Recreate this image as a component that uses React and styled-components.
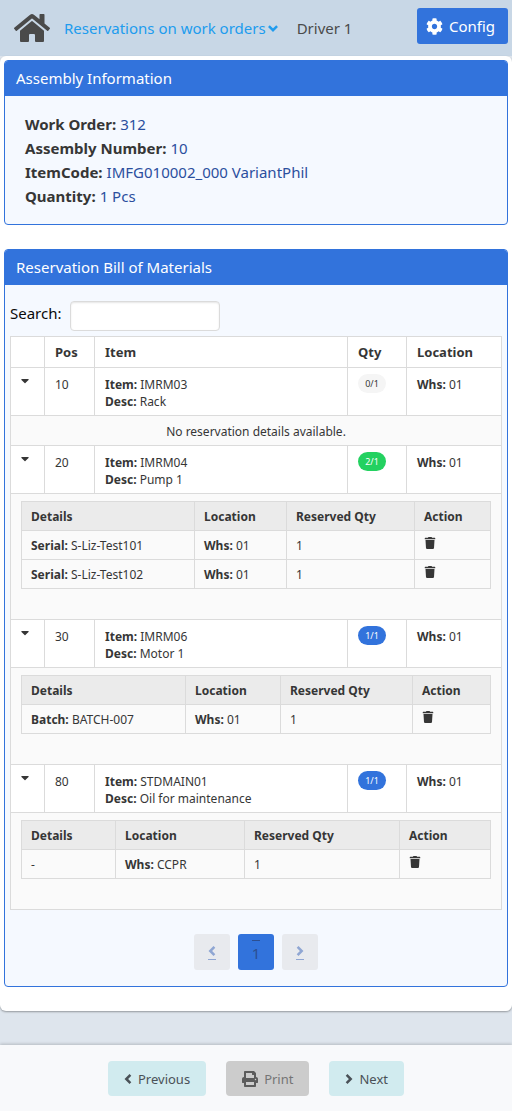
import React from 'react';
import styled, { createGlobalStyle, css } from 'styled-components';
import { FaHome, FaCog, FaTrash, FaPrint } from 'react-icons/fa';

const blue = '#3273dc';
const line = '#dbdbdb';

const GlobalStyle = createGlobalStyle`
  * { box-sizing: border-box; }
  body {
    margin: 0;
    background: #dee5ed;
    color: #363636;
    font: 15px/24px "Noto Sans", "Open Sans", sans-serif;
  }
  button, input { font: inherit; }
  strong, th { font-weight: 700; }
`;

const Page = styled.div`
  display: flex;
  flex-direction: column;
  min-height: 100vh;
`;

const TopBar = styled.header`
  display: flex;
  align-items: center;
  height: 56px;
  padding: 0 4px 0 14px;
  background: #c8d7e6;
  color: #4a4a4a;
`;

const HomeLink = styled.a`
  display: flex;
  margin-right: 14px;
  color: #4a4a4a;
  font-size: 36px;
`;

const MenuButton = styled.button`
  display: flex;
  align-items: center;
  gap: 1px;
  padding: 0;
  border: 0;
  background: none;
  color: #209cee;
  margin-right: 18px;
`;

const ConfigButton = styled.button`
  display: flex;
  align-items: center;
  gap: 6px;
  height: 36px;
  margin: 0 0 4px auto;
  padding: 0 13px 0 9px;
  border: 0;
  border-radius: 3px;
  background: ${blue};
  color: #fff;
  svg { font-size: 17px; }
`;

const Sheet = styled.main`
  display: flex;
  flex-direction: column;
  gap: 24px;
  padding: 4px 4px 24px;
  margin-bottom: 34px;
  border-radius: 6px;
  background: #fff;
  box-shadow: 0 1px 2px rgba(10, 10, 10, 0.35);
`;

const Panel = styled.section`
  border: 1px solid ${blue};
  border-radius: 4px;
  background: #f5f9ff;
  overflow: hidden;
`;

const PanelTitle = styled.h2`
  margin: 0;
  padding: 5px 11px 6px;
  background: ${blue};
  color: #fff;
  font-size: 15px;
  font-weight: 400;
`;

const Facts = styled.dl`
  margin: 0;
  padding: 16px 20px;
`;

const Fact = styled.div`
  display: flex;
  gap: 4px;
  dt { font-weight: 700; }
  dd { margin: 0; color: #2b4f9e; }
`;

const BomBody = styled.div`
  padding: 16px 5px;
`;

const SearchRow = styled.div`
  display: flex;
  align-items: center;
  gap: 8px;
  margin-bottom: 5px;
  color: #0a0a0a;
  label { padding-bottom: 6px; }
`;

const SearchInput = styled.input`
  width: 150px;
  height: 30px;
  padding: 0 8px;
  border: 1px solid ${line};
  border-radius: 4px;
  background: #fff;
  box-shadow: inset 0 1px 2px rgba(10, 10, 10, 0.1);
`;

const grid = css`
  width: 100%;
  border-collapse: collapse;
  table-layout: fixed;
  th, td {
    border: 1px solid ${line};
    text-align: left;
    vertical-align: top;
  }
`;

const BomTable = styled.table`
  ${grid}
  background: #fff;
  font-size: 12px;
  line-height: 17px;
  > thead > tr > th { padding: 7px 10px 6px; font-size: 13px; }
`;

const Column = styled.col`
  width: ${(p) => p.$width};
`;

const TextCell = styled.td`
  padding: 8px 10px 5px;
`;

const QtyCell = styled.td`
  padding: 6px 10px;
`;

const Message = styled.td`
  padding: 8px 10px 5px;
  background: #fafafa;
  line-height: 16px;
  && { text-align: center; }
`;

const DetailCell = styled.td`
  padding: 7px 10px 6px;
  background: #fafafa;
`;

const DetailTable = styled.table`
  ${grid}
  margin-bottom: 24px;
  line-height: 16px;
  th { padding: 7px 9px 5px; background: #ebebeb; }
  td { padding: 7px 9px 5px; }
`;

const ActionCell = styled.td`
  && { padding: 6px 9px; }
`;

const IconButton = styled.button`
  display: block;
  padding: 0;
  border: 0;
  background: none;
  color: #363636;
  font-size: 12px;
  line-height: 12px;
  svg { display: block; }
`;

const Tag = styled.span`
  display: inline-block;
  min-width: 28px;
  padding: 0 7px;
  border-radius: 10px;
  font-size: 9px;
  line-height: 19px;
  text-align: center;
  vertical-align: top;
  background: ${(p) => ({ none: '#f5f5f5', over: '#23d160', full: blue }[p.$state])};
  color: ${(p) => (p.$state === 'none' ? '#363636' : '#fff')};
`;

const Pagination = styled.nav`
  display: flex;
  justify-content: center;
  gap: 8px;
  margin-top: 24px;
`;

const PageButton = styled.button`
  display: flex;
  align-items: center;
  justify-content: center;
  width: 36px;
  height: 36px;
  padding: 0;
  border: 0;
  border-radius: 3px;
  background: ${(p) => (p.$current ? blue : '#e8eaee')};
  color: ${(p) => (p.$current ? '#2c4f91' : '#8fa6d3')};
  span {
    display: flex;
    ${(p) => (p.$current
    ? 'border-top: 1px solid;'
    : 'padding-bottom: 2px; border-bottom: 1px solid;')}
  }
`;

const Footer = styled.footer`
  display: flex;
  justify-content: center;
  gap: 20px;
  margin-top: auto;
  padding: 16px 8px 15px;
  background: #f8f9fb;
  box-shadow: 0 -1px 3px rgba(10, 10, 10, 0.2);
`;

const FooterButton = styled.button`
  display: flex;
  align-items: center;
  gap: 6px;
  height: 35px;
  padding: 0 16px;
  border: 0;
  border-radius: 4px;
  background: ${(p) => (p.disabled ? '#cccccc' : '#d1ebef')};
  color: ${(p) => (p.disabled ? '#757575' : '#4a5157')};
  font-size: 13px;
`;

const PrintIcon = styled(FaPrint)`
  color: #5c5c5c;
  font-size: 16px;
`;

const chevrons = {
  left: { w: 8, h: 12, d: 'M6.4 1.9 2.3 6l4.1 4.1' },
  right: { w: 8, h: 12, d: 'M1.6 1.9 5.7 6l-4.1 4.1' },
  down: { w: 12, h: 8, d: 'M1.9 2.2 6 6.2l4.1-4' },
};

function Chevron({ to }) {
  const { w, h, d } = chevrons[to];
  return (
    <svg width={w} height={h} viewBox={`0 0 ${w} ${h}`} aria-hidden="true">
      <path d={d} fill="none" stroke="currentColor" strokeWidth="2.5" />
    </svg>
  );
}

function Caret() {
  return (
    <svg width="8" height="10" viewBox="0 0 8 10" aria-hidden="true">
      <path d="M.7 3h6.6q.7.2.2.9L4.4 7q-.4.4-.8 0L.5 3.9Q0 3.2.7 3z" fill="currentColor" />
    </svg>
  );
}

const facts = [
  ['Work Order:', '312'],
  ['Assembly Number:', '10'],
  ['ItemCode:', 'IMFG010002_000 VariantPhil'],
  ['Quantity:', '1 Pcs'],
];

const items = [
  { pos: 10, item: 'IMRM03', desc: 'Rack', qty: '0/1', state: 'none', whs: '01' },
  {
    pos: 20, item: 'IMRM04', desc: 'Pump 1', qty: '2/1', state: 'over', whs: '01',
    widths: ['173px', '92px', '128px', 'auto'],
    details: [
      { kind: 'Serial:', code: 'S-Liz-Test101', whs: '01', qty: 1 },
      { kind: 'Serial:', code: 'S-Liz-Test102', whs: '01', qty: 1 },
    ],
  },
  {
    pos: 30, item: 'IMRM06', desc: 'Motor 1', qty: '1/1', state: 'full', whs: '01',
    widths: ['164px', '95px', '132px', 'auto'],
    details: [{ kind: 'Batch:', code: 'BATCH-007', whs: '01', qty: 1 }],
  },
  {
    pos: 80, item: 'STDMAIN01', desc: 'Oil for maintenance', qty: '1/1', state: 'full', whs: '01',
    widths: ['94px', '129px', '155px', 'auto'],
    details: [{ code: '-', whs: 'CCPR', qty: 1 }],
  },
];

function Details({ widths, rows }) {
  return (
    <DetailTable>
      <colgroup>{widths.map((w, i) => <Column key={i} $width={w} />)}</colgroup>
      <thead>
        <tr><th>Details</th><th>Location</th><th>Reserved Qty</th><th>Action</th></tr>
      </thead>
      <tbody>
        {rows.map((d) => (
          <tr key={d.code}>
            <td>{d.kind && <strong>{d.kind} </strong>}{d.code}</td>
            <td><strong>Whs:</strong> {d.whs}</td>
            <td>{d.qty}</td>
            <ActionCell>
              <IconButton type="button" aria-label="Delete reservation"><FaTrash /></IconButton>
            </ActionCell>
          </tr>
        ))}
      </tbody>
    </DetailTable>
  );
}

function ItemRows({ row }) {
  return (
    <>
      <tr>
        <TextCell><IconButton type="button" aria-label="Toggle details"><Caret /></IconButton></TextCell>
        <TextCell>{row.pos}</TextCell>
        <TextCell>
          <strong>Item:</strong> {row.item}<br />
          <strong>Desc:</strong> {row.desc}
        </TextCell>
        <QtyCell><Tag $state={row.state}>{row.qty}</Tag></QtyCell>
        <TextCell><strong>Whs:</strong> {row.whs}</TextCell>
      </tr>
      <tr>
        {row.details
          ? <DetailCell colSpan={5}><Details widths={row.widths} rows={row.details} /></DetailCell>
          : <Message colSpan={5}>No reservation details available.</Message>}
      </tr>
    </>
  );
}

export default function App() {
  return (
    <Page>
      <GlobalStyle />
      <TopBar>
        <HomeLink href="#" aria-label="Home"><FaHome /></HomeLink>
        <MenuButton type="button">Reservations on work orders<Chevron to="down" /></MenuButton>
        <span>Driver 1</span>
        <ConfigButton type="button"><FaCog />Config</ConfigButton>
      </TopBar>
      <Sheet>
        <Panel>
          <PanelTitle>Assembly Information</PanelTitle>
          <Facts>
            {facts.map(([name, value]) => (
              <Fact key={name}><dt>{name}</dt><dd>{value}</dd></Fact>
            ))}
          </Facts>
        </Panel>
        <Panel>
          <PanelTitle>Reservation Bill of Materials</PanelTitle>
          <BomBody>
            <SearchRow>
              <label htmlFor="search">Search:</label>
              <SearchInput id="search" type="text" />
            </SearchRow>
            <BomTable>
              <colgroup>
                <Column $width="34px" />
                <Column $width="50px" />
                <Column $width="auto" />
                <Column $width="59px" />
                <Column $width="95px" />
              </colgroup>
              <thead>
                <tr><th aria-label="Details" /><th>Pos</th><th>Item</th><th>Qty</th><th>Location</th></tr>
              </thead>
              <tbody>{items.map((row) => <ItemRows key={row.pos} row={row} />)}</tbody>
            </BomTable>
            <Pagination aria-label="Pages">
              <PageButton type="button" aria-label="Previous page"><span><Chevron to="left" /></span></PageButton>
              <PageButton type="button" $current><span>1</span></PageButton>
              <PageButton type="button" aria-label="Next page"><span><Chevron to="right" /></span></PageButton>
            </Pagination>
          </BomBody>
        </Panel>
      </Sheet>
      <Footer>
        <FooterButton type="button"><Chevron to="left" />Previous</FooterButton>
        <FooterButton type="button" disabled><PrintIcon />Print</FooterButton>
        <FooterButton type="button"><Chevron to="right" />Next</FooterButton>
      </Footer>
    </Page>
  );
}
